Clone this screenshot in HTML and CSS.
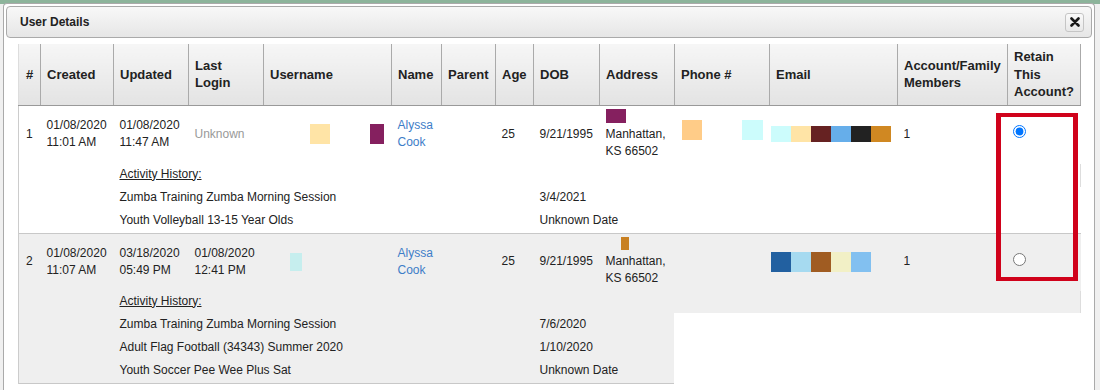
FILE: index.html
```html
<!DOCTYPE html>
<html lang="en">
<head>
    <meta charset="UTF-8">
    <title>User Details</title>
    <link rel="stylesheet" href="styles.css">
</head>
<body>
    <div class="dialog">
        <div class="dialog-titlebar">
            <span class="dialog-title">User Details</span>
            <button class="dialog-close" title="Close">
                <svg width="10" height="10" viewBox="0 0 10 10"><path d="M1.5 1.5 L8.5 8.5 M8.5 1.5 L1.5 8.5" stroke="#1a1a1a" stroke-width="2.6" stroke-linecap="round"/></svg>
            </button>
        </div>
        <div class="dialog-content">
            <table class="user-table">
                <colgroup>
                    <col style="width:22px">
                    <col style="width:73px">
                    <col style="width:75px">
                    <col style="width:75px">
                    <col style="width:128px">
                    <col style="width:50px">
                    <col style="width:54px">
                    <col style="width:38px">
                    <col style="width:66px">
                    <col style="width:75px">
                    <col style="width:95px">
                    <col style="width:128px">
                    <col style="width:110px">
                    <col style="width:73px">
                </colgroup>
                <thead>
                    <tr>
                        <th>#</th>
                        <th>Created</th>
                        <th>Updated</th>
                        <th>Last Login</th>
                        <th>Username</th>
                        <th>Name</th>
                        <th>Parent</th>
                        <th>Age</th>
                        <th>DOB</th>
                        <th>Address</th>
                        <th>Phone #</th>
                        <th>Email</th>
                        <th>Account/Family Members</th>
                        <th>Retain This Account?</th>
                    </tr>
                </thead>

                <tbody class="record">
                    <tr class="main-row">
                        <td>1</td>
                        <td>01/08/2020<br>11:01 AM</td>
                        <td>01/08/2020<br>11:47 AM</td>
                        <td class="muted">Unknown</td>
                        <td>
                            <div class="blots">
                                <span class="blot b-cream user-a"></span>
                                <span class="blot b-plum user-b"></span>
                            </div>
                        </td>
                        <td><a class="name-link" href="#">Alyssa Cook</a></td>
                        <td></td>
                        <td>25</td>
                        <td>9/21/1995</td>
                        <td>
                            <span class="blot b-plum addr-a"></span>
                            Manhattan,<br>KS 66502
                        </td>
                        <td>
                            <div class="blots phone">
                                <span class="blot b-peach phone-a"></span>
                                <span class="blot b-ice phone-b"></span>
                            </div>
                        </td>
                        <td class="email-cell">
                            <div class="blots">
                                <span class="blot email-a b-ice"></span>
                                <span class="blot email-a b-cream"></span>
                                <span class="blot email-a b-maroon"></span>
                                <span class="blot email-a b-sky"></span>
                                <span class="blot email-a b-black"></span>
                                <span class="blot email-a b-ochre"></span>
                            </div>
                        </td>
                        <td>1</td>
                        <td><input type="radio" name="retain" checked></td>
                    </tr>
                    <tr class="activity-row">
                        <td></td><td></td>
                        <td colspan="6"><u>Activity History:</u></td>
                        <td colspan="6" class="edge"></td>
                    </tr>
                    <tr class="activity-row">
                        <td></td><td></td>
                        <td colspan="6">Zumba Training Zumba Morning Session</td>
                        <td colspan="6">3/4/2021</td>
                    </tr>
                    <tr class="activity-row">
                        <td></td><td></td>
                        <td colspan="6">Youth Volleyball 13-15 Year Olds</td>
                        <td colspan="6">Unknown Date</td>
                    </tr>
                </tbody>

                <tbody class="record alt">
                    <tr class="main-row">
                        <td>2</td>
                        <td>01/08/2020<br>11:07 AM</td>
                        <td>03/18/2020<br>05:49 PM</td>
                        <td>01/08/2020<br>12:41 PM</td>
                        <td>
                            <div class="blots">
                                <span class="blot b-mint user-c"></span>
                            </div>
                        </td>
                        <td><a class="name-link" href="#">Alyssa Cook</a></td>
                        <td></td>
                        <td>25</td>
                        <td>9/21/1995</td>
                        <td>
                            <span class="blot b-amber addr-b"></span>
                            Manhattan,<br>KS 66502
                        </td>
                        <td></td>
                        <td class="email-cell">
                            <div class="blots">
                                <span class="blot email-b b-navy"></span>
                                <span class="blot email-b b-pale"></span>
                                <span class="blot email-b b-rust"></span>
                                <span class="blot email-b b-lemon"></span>
                                <span class="blot email-b b-azure"></span>
                            </div>
                        </td>
                        <td>1</td>
                        <td><input type="radio" name="retain"></td>
                    </tr>
                    <tr class="activity-row">
                        <td></td><td></td>
                        <td colspan="6"><u>Activity History:</u></td>
                        <td colspan="6" class="edge"></td>
                    </tr>
                    <tr class="activity-row">
                        <td></td><td></td>
                        <td colspan="6">Zumba Training Zumba Morning Session</td>
                        <td colspan="6">7/6/2020</td>
                    </tr>
                    <tr class="activity-row">
                        <td></td><td></td>
                        <td colspan="6">Adult Flag Football (34343) Summer 2020</td>
                        <td colspan="6">1/10/2020</td>
                    </tr>
                    <tr class="activity-row">
                        <td></td><td></td>
                        <td colspan="6">Youth Soccer Pee Wee Plus Sat</td>
                        <td colspan="6">Unknown Date</td>
                    </tr>
                </tbody>
            </table>
        </div>
    </div>

    <div class="retain-highlight"></div>
    <div class="mask"></div>
</body>
</html>
```

FILE: styles.css
```css
body {
    margin: 0;
    height: 390px;
    overflow: hidden;
    position: relative;
    font-family: "Liberation Sans", Arial, sans-serif;
    font-size: 12px;
    color: #222;
    background: linear-gradient(#8db49b 0, #8db49b 4px, #f0f0f0 4px);
}
.dialog {
    width: 1092px;
    height: 387px;
    overflow: hidden;
    margin: 3px 0 0 3px;
    box-sizing: border-box;
    border: 1px solid #aaa;
    border-bottom: none;
    border-radius: 4px 4px 0 0;
    padding: 2px;
    background-color: #fff;
}
.dialog-titlebar {
    height: 32px;
    box-sizing: border-box;
    border: 1px solid #aaa;
    border-radius: 4px;
    background: linear-gradient(#f8f8f8, #e6e6e6);
    display: flex;
    align-items: center;
    justify-content: space-between;
    padding: 0 7px 0 13px;
}
.dialog-title {
    font-weight: bold;
    font-size: 12px;
    color: #222;
}
.dialog-close {
    width: 19px;
    height: 19px;
    padding: 0;
    border: 1px solid #c5c5c5;
    border-radius: 3px;
    background: linear-gradient(#fafafa, #e8e8e8);
    display: flex;
    align-items: center;
    justify-content: center;
    cursor: pointer;
}
.dialog-content {
    padding: 6px 0 0 12px;
}
.user-table {
    width: 1062px;
    table-layout: fixed;
    border-collapse: collapse;
    line-height: 17px;
}
.user-table th {
    text-align: left;
    vertical-align: middle;
    font-size: 13px;
    font-weight: bold;
    line-height: 17.5px;
    padding: 4px 6px;
    background: linear-gradient(#f6f6f6, #e3e3e3);
    border-right: 1px solid #aaa;
    border-bottom: 1px solid #999;
}
.user-table th:first-child {
    padding-left: 7px;
    border-left: 1px solid #ddd;
}
.user-table td:first-child {
    border-left: 1px solid #ccc;
    padding-left: 7px;
}
.record {
    border-bottom: 1px solid #c8c8c8;
}
.record.alt {
    background-color: #efefef;
}
.main-row td {
    vertical-align: middle;
    padding: 3px 6px 4px;
}
.activity-row td {
    padding: 2px 6px 4px;
}
.activity-row td.edge {
    border-right: 1px solid #ddd;
}
.muted {
    color: #999;
}
.name-link {
    color: #3d7dc8;
    text-decoration: none;
}
.main-row input[type="radio"] {
    display: block;
    margin: 0 0 5px -1px;
}
.main-row td.email-cell {
    padding-left: 1px;
}

/* redacted blocks */
.blots {
    display: flex;
    align-items: center;
}
.blots.phone {
    align-items: flex-start;
    padding-bottom: 8px;
}
.blot {
    display: inline-block;
    flex: none;
}
.user-a { width: 20px; height: 20px; margin-left: 40px; }
.user-b { width: 14px; height: 20px; margin-left: 40px; }
.user-c { width: 12px; height: 18px; margin-left: 20px; }
.addr-a { display: block; width: 20px; height: 14px; margin-bottom: 3px; }
.addr-b { display: block; width: 8px; height: 13px; margin: 0 0 3px 15px; }
.phone-a { width: 20px; height: 20px; margin-left: 1px; }
.phone-b { width: 21px; height: 20px; margin-left: 40px; }
.email-a { width: 20px; height: 16px; }
.email-b { width: 20px; height: 20px; }
.b-cream { background-color: #ffe4a6; }
.b-plum { background-color: #85205f; }
.b-mint { background-color: #c6eeee; }
.b-amber { background-color: #c88022; }
.b-peach { background-color: #ffcc88; }
.b-ice { background-color: #ccfcfc; }
.b-maroon { background-color: #662222; }
.b-sky { background-color: #66aeea; }
.b-black { background-color: #222; }
.b-ochre { background-color: #d08822; }
.b-navy { background-color: #2260a0; }
.b-pale { background-color: #a6daf0; }
.b-rust { background-color: #a05c22; }
.b-lemon { background-color: #f2f0c6; }
.b-azure { background-color: #82c0f0; }

/* annotations laid over the screenshot */
.retain-highlight {
    position: absolute;
    left: 996px;
    top: 113px;
    width: 82px;
    height: 168px;
    box-sizing: border-box;
    border: 4px solid #d0021b;
    border-left-width: 5px;
    border-right-width: 5px;
}
.mask {
    position: absolute;
    left: 674px;
    top: 313px;
    width: 407px;
    height: 77px;
    background-color: #fff;
}
```
